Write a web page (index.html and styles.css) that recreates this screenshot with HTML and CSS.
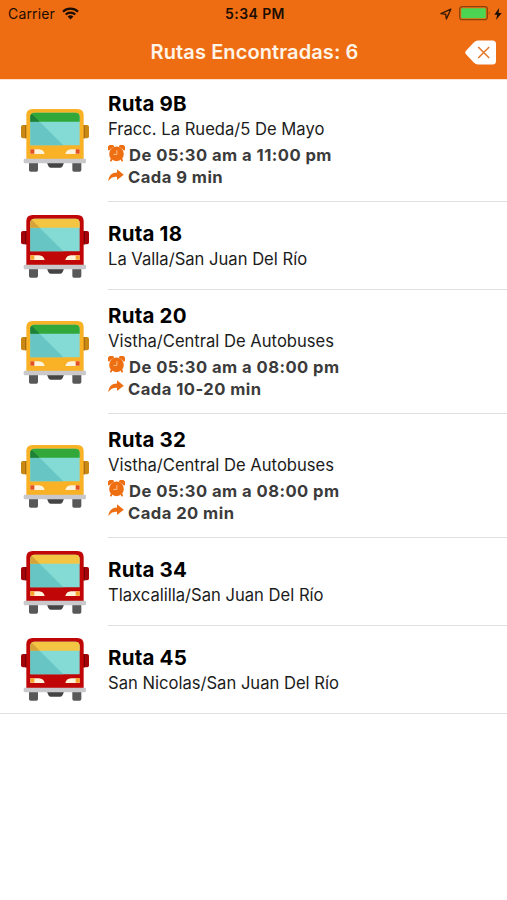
FILE: index.html
```html
<!DOCTYPE html>
<html lang="es">
<head>
  <meta charset="utf-8">
  <title>Rutas Encontradas</title>
  <link rel="stylesheet" href="styles.css">
</head>
<body>
  <!-- shared icons -->
  <svg class="sprite" width="0" height="0">
    <symbol id="bus" viewBox="33 41 204 189">
      <rect x="33" y="89" width="22" height="40" rx="6" fill="var(--mirror)"/>
      <rect x="215" y="89" width="22" height="40" rx="6" fill="var(--mirror)"/>
      <rect x="45" y="89" width="8" height="40" fill="var(--mirror-in)"/>
      <rect x="217" y="89" width="8" height="40" fill="var(--mirror-in)"/>
      <path d="M57 202h27v22q0 5-5 5H62q-5 0-5-5zM187 202h27v22q0 5-5 5h-17q-5 0-5-5z" fill="#585858"/>
      <path d="M111 202h51l-4 10q-2 5-7 5h-29q-5 0-7-5z" fill="#444"/>
      <path d="M49 192V60q0-19 19-19h134q19 0 19 19v132z" fill="var(--body)"/>
      <path d="M61 150V65q0-13 13-13h122q13 0 13 13v85z" fill="#84dbd5"/>
      <path d="M61 79V65q0-13 13-13h122q13 0 13 13v14z" fill="var(--sign)"/>
      <path d="M61 79h28l71 71H61z" fill="#67c5c3"/>
      <path d="M61 79V61l4-6 24 24z" fill="var(--sign-dark)"/>
      <path d="M61 162h26q14 1 17 14H61zM209 162h-26q-14 1-17 14h43z" fill="#fff3dc"/>
      <path d="M61 162h12v13H61zM197 162h12v13h-12z" fill="var(--lamp)"/>
      <rect x="41" y="190" width="187" height="14" rx="4" fill="#c9c9cb"/>
    </symbol>
    <symbol id="clock" viewBox="0 0 17 17">
      <path d="M.8 5.200A3.200 3.200 0 0 1 5.800 1.200zM16.200 5.200a3.200 3.200 0 0 0-5-4z" fill="#ee6e12" stroke="#ee6e12"/>
      <circle cx="8.500" cy="8.900" r="7.300" fill="#ee6e12"/>
      <path d="M3.800 13.500L3 15.500M13.200 13.500l.8 2" stroke="#ee6e12" stroke-width="2" stroke-linecap="round"/>
      <path d="M8.900 5.200v4.200H5.500" fill="none" stroke="#ffc08a" stroke-width="1"/>
    </symbol>
    <symbol id="share" viewBox="0 0 16 13">
      <path d="M.3 12.300C.8 6.600 3.800 3.600 9 3.500V.3l6.800 5.400L9 11V7.700C5 7.500 2.500 8.800.3 12.300z" fill="#ee6e12"/>
    </symbol>
  </svg>

  <header class="header">
    <div class="status">
      <div class="status-left">
        <span class="carrier">Carrier</span>
        <svg class="wifi" width="17" height="13" viewBox="0 0 17 13">
          <path d="M1 4.700a10.800 10.800 0 0 1 15 0M3.700 7.500a7 7 0 0 1 9.600 0" fill="none" stroke="#1c0d02" stroke-width="2.100"/>
          <path d="M8.500 12.500L5.600 9.600a4.200 4.200 0 0 1 5.800 0z" fill="#1c0d02"/>
        </svg>
      </div>
      <span class="time">5:34 PM</span>
      <div class="status-right">
        <svg width="12" height="12" viewBox="0 0 12 12">
          <path d="M10.800 1.200L1 5.600l4.700.7.700 4.700z" fill="none" stroke="#3a1a02" stroke-width="1.400" stroke-linejoin="round"/>
        </svg>
        <svg class="battery" width="32" height="15" viewBox="0 0 32 15">
          <rect x=".7" y=".7" width="27.600" height="13" rx="2.500" fill="none" stroke="#8a430a" stroke-width="1.300"/>
          <rect x="2.200" y="2.200" width="24.600" height="10" rx="1" fill="#4cd552"/>
          <path d="M29.800 5q1.700 2.200 0 4.400z" fill="#8a430a"/>
        </svg>
        <svg class="bolt" width="8" height="12" viewBox="0 0 8 12">
          <path d="M5.200 0L.3 6.700h2.900L2 12l5.700-7H4.600z" fill="#1c0d02"/>
        </svg>
      </div>
    </div>
    <div class="navbar">
      <h1 class="title">Rutas Encontradas: 6</h1>
      <svg class="clear" width="32" height="25" viewBox="0 0 32 25">
        <path d="M1 10.700L9 2.200Q10.700.5 13 .5h14.500q3.500 0 3.500 3.500v17q0 3.500-3.500 3.500H13q-2.300 0-4-1.700L1 14.300q-1.500-1.800 0-3.600z" fill="#fff"/>
        <path d="M13.200 7l11 11M24.200 7l-11 11" stroke="#e5792e" stroke-width="1.600"/>
      </svg>
    </div>
  </header>

  <ul class="routes">
    <li class="route route-tall">
      <svg class="bus bus-yellow"><use href="#bus"/></svg>
      <div class="info">
        <h2 class="name">Ruta 9B</h2>
        <p class="path">Fracc. La Rueda/5 De Mayo</p>
        <p class="detail hours"><svg class="clock"><use href="#clock"/></svg>De 05:30 am a 11:00 pm</p>
        <p class="detail"><svg class="share"><use href="#share"/></svg>Cada 9 min</p>
      </div>
    </li>
    <li class="route">
      <svg class="bus bus-red"><use href="#bus"/></svg>
      <div class="info">
        <h2 class="name">Ruta 18</h2>
        <p class="path">La Valla/San Juan Del Río</p>
      </div>
    </li>
    <li class="route route-tall">
      <svg class="bus bus-yellow"><use href="#bus"/></svg>
      <div class="info">
        <h2 class="name">Ruta 20</h2>
        <p class="path">Vistha/Central De Autobuses</p>
        <p class="detail hours"><svg class="clock"><use href="#clock"/></svg>De 05:30 am a 08:00 pm</p>
        <p class="detail"><svg class="share"><use href="#share"/></svg>Cada 10-20 min</p>
      </div>
    </li>
    <li class="route route-tall">
      <svg class="bus bus-yellow"><use href="#bus"/></svg>
      <div class="info">
        <h2 class="name">Ruta 32</h2>
        <p class="path">Vistha/Central De Autobuses</p>
        <p class="detail hours"><svg class="clock"><use href="#clock"/></svg>De 05:30 am a 08:00 pm</p>
        <p class="detail"><svg class="share"><use href="#share"/></svg>Cada 20 min</p>
      </div>
    </li>
    <li class="route">
      <svg class="bus bus-red"><use href="#bus"/></svg>
      <div class="info">
        <h2 class="name">Ruta 34</h2>
        <p class="path">Tlaxcalilla/San Juan Del Río</p>
      </div>
    </li>
    <li class="route">
      <svg class="bus bus-red"><use href="#bus"/></svg>
      <div class="info">
        <h2 class="name">Ruta 45</h2>
        <p class="path">San Nicolas/San Juan Del Río</p>
      </div>
    </li>
  </ul>
</body>
</html>
```
FILE: styles.css
```css
* {
  box-sizing: border-box;
}

body {
  margin: 0;
  background: #fff;
  color: #000;
  font-family: Inter, "Liberation Sans", sans-serif;
}

h1, h2, p, ul {
  margin: 0;
  padding: 0;
}

svg {
  display: block;
  flex: none;
}

.sprite {
  position: absolute;
}

/* header */
.header {
  height: 79px;
  background: #ef6d12;
  box-shadow: 0 1px 0 #fde3cf;
}

.status {
  display: grid;
  grid-template-columns: 1fr auto 1fr;
  align-items: center;
  height: 27px;
  padding: 0 5px 0 8px;
  color: #1c0d02;
  font-size: 14px;
}

.status-left,
.status-right {
  display: flex;
  align-items: center;
}

.carrier {
  letter-spacing: 0.15px;
}

.wifi {
  margin-left: 7px;
}

.time {
  font-weight: 600;
  letter-spacing: 0.4px;
}

.status-right {
  justify-content: flex-end;
}

.battery {
  margin-left: 7px;
}

.bolt {
  margin-left: 3px;
}

.navbar {
  display: grid;
  grid-template-columns: 44px 1fr 42px;
  align-items: center;
  height: 51px;
}

.title {
  grid-column: 2;
  padding-bottom: 1px;
  text-align: center;
  color: #fff4e8;
  font-size: 20px;
  font-weight: 600;
  letter-spacing: 0.1px;
  white-space: nowrap;
}

/* list */
.routes {
  list-style: none;
}

.route {
  display: flex;
  height: 88px;
  padding-left: 21px;
  align-items: center;
}

.route-tall {
  height: 124px;
}

.route:first-child {
  height: 123px;
}

.route:last-child {
  border-bottom: 1px solid #dfdfe1;
}

.bus {
  width: 68px;
  height: 63px;
}

.bus-yellow {
  --body: #f9b126;
  --mirror: #c98714;
  --mirror-in: #a96f12;
  --sign: #32a83a;
  --sign-dark: #1f8138;
  --lamp: #e2501f;
}

.bus-red {
  --body: #c00606;
  --mirror: #a10509;
  --mirror-in: #780408;
  --sign: #f4c543;
  --sign-dark: #d5a33a;
  --lamp: #f7a32c;
}

.info {
  display: flex;
  flex-direction: column;
  flex: 1;
  justify-content: center;
  height: 100%;
  margin-left: 19px;
  padding-top: 1px;
  border-bottom: 1px solid #dfdfe1;
}

.route-tall .info {
  padding-top: 0;
  padding-bottom: 1px;
}

.route:last-child .info {
  border-bottom: none;
}

.name {
  font-size: 20.5px;
  font-weight: 700;
  line-height: 26px;
  letter-spacing: 0.2px;
}

.path {
  color: #1c1c1c;
  font-size: 16.600px;
  line-height: 25px;
}

.detail {
  display: flex;
  align-items: center;
  gap: 4px;
  height: 22px;
  color: #3b3b3b;
  font-size: 16.600px;
  font-weight: 700;
  letter-spacing: 0.45px;
}

.hours {
  margin-top: 2px;
}

.clock {
  width: 17px;
  height: 17px;
  margin-top: -4px;
}

.share {
  width: 16px;
  height: 13px;
  margin-top: -4px;
}
```
